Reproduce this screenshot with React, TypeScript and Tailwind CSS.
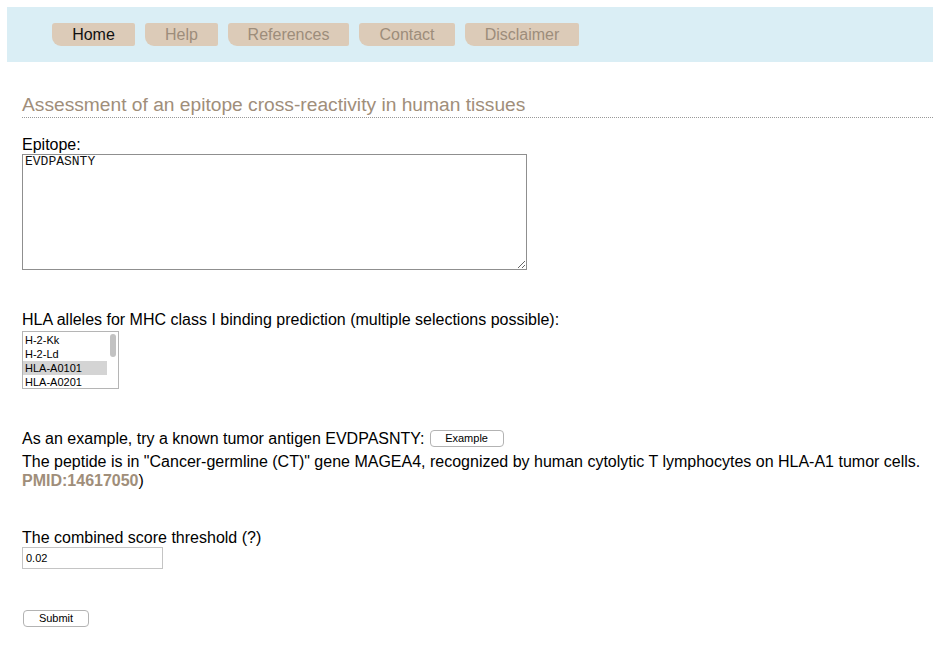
const tabs = [
  { label: "Home", w: "w-[83px]" },
  { label: "Help", w: "w-[73px]" },
  { label: "References", w: "w-[121px]" },
  { label: "Contact", w: "w-[96px]" },
  { label: "Disclaimer", w: "w-[114px]" },
];

const alleles = ["H-2-Kk", "H-2-Ld", "HLA-A0101", "HLA-A0201"];

function Tab({ label, w, active }: { label: string; w: string; active: boolean }) {
  return (
    <div
      className={`${w} h-[23px] flex items-center justify-center bg-[#dccbb8] rounded-tl-[3px] rounded-bl-[9px] rounded-r-[2px] text-[16px] leading-none ${
        active ? "text-[#111]" : "text-[#9d8d7b]"
      }`}
    >
      {label}
    </div>
  );
}

export default function App() {
  return (
    <div className="min-h-[650px] bg-white pt-[7px] pl-[7px] font-['Liberation_Sans',Arial,sans-serif] text-[16px] text-black">
      <div className="h-[55px] bg-[#daeef5] flex items-start pt-[16px] pl-[45px] gap-[10px]">
        {tabs.map((t, i) => (
          <Tab key={t.label} label={t.label} w={t.w} active={i === 0} />
        ))}
      </div>

      <div className="pl-[15px] pt-[31px]">
        <h1 className="text-[19.2px] leading-[23px] text-[#a08e7a] pb-[1px] border-b border-dotted border-[#999]">
          Assessment of an epitope cross-reactivity in human tissues
        </h1>

        <div className="mt-[17px] leading-[19px]">Epitope:</div>
        <textarea
          defaultValue="EVDPASNTY"
          className="block w-[505px] h-[116px] border border-[#8f8f8f] px-[2px] py-0 font-['Liberation_Mono',monospace] text-[13px] leading-[14px] text-[#111] outline-none"
        />

        <div className="mt-[40px] leading-[19px]">
          HLA alleles for MHC class I binding prediction (multiple selections possible):
        </div>
        <div className="mt-[2px] w-[97px] h-[58px] border border-[#b5b5b5] flex text-[11px] leading-[14px] overflow-hidden">
          <div className="flex-1 pt-[1px]">
            {alleles.map((a) => (
              <div
                key={a}
                className={`pl-[2px] ${a === "HLA-A0101" ? "bg-[#d4d4d4]" : ""}`}
              >
                {a}
              </div>
            ))}
          </div>
          <div className="w-[11px] pt-[2px] flex justify-center">
            <div className="w-[6px] h-[23px] rounded-full bg-[#c2c2c2]" />
          </div>
        </div>

        <div className="mt-[40px] leading-[19px] flex items-center">
          <span>As an example, try a known tumor antigen EVDPASNTY:</span>
          <button className="ml-[5px] w-[74px] h-[17px] border border-[#b3b3b3] rounded-[4px] bg-white text-[11px] leading-none">
            Example
          </button>
        </div>
        <div className="leading-[19px] mt-[4px]">
          The peptide is in "Cancer-germline (CT)" gene MAGEA4, recognized by human cytolytic T
          lymphocytes on HLA-A1 tumor cells.
          <br />
          <span className="font-bold text-[#a08e7a]">PMID:14617050</span>)
        </div>

        <div className="mt-[38px] leading-[19px]">The combined score threshold (?)</div>
        <input
          defaultValue="0.02"
          className="block w-[141px] h-[22px] border border-[#c4c4c4] px-[3px] text-[11px] outline-none"
        />

        <button className="mt-[41px] ml-[1px] block w-[66px] h-[17px] border border-[#b3b3b3] rounded-[4px] bg-white text-[11px] leading-none">
          Submit
        </button>
      </div>
    </div>
  );
}
